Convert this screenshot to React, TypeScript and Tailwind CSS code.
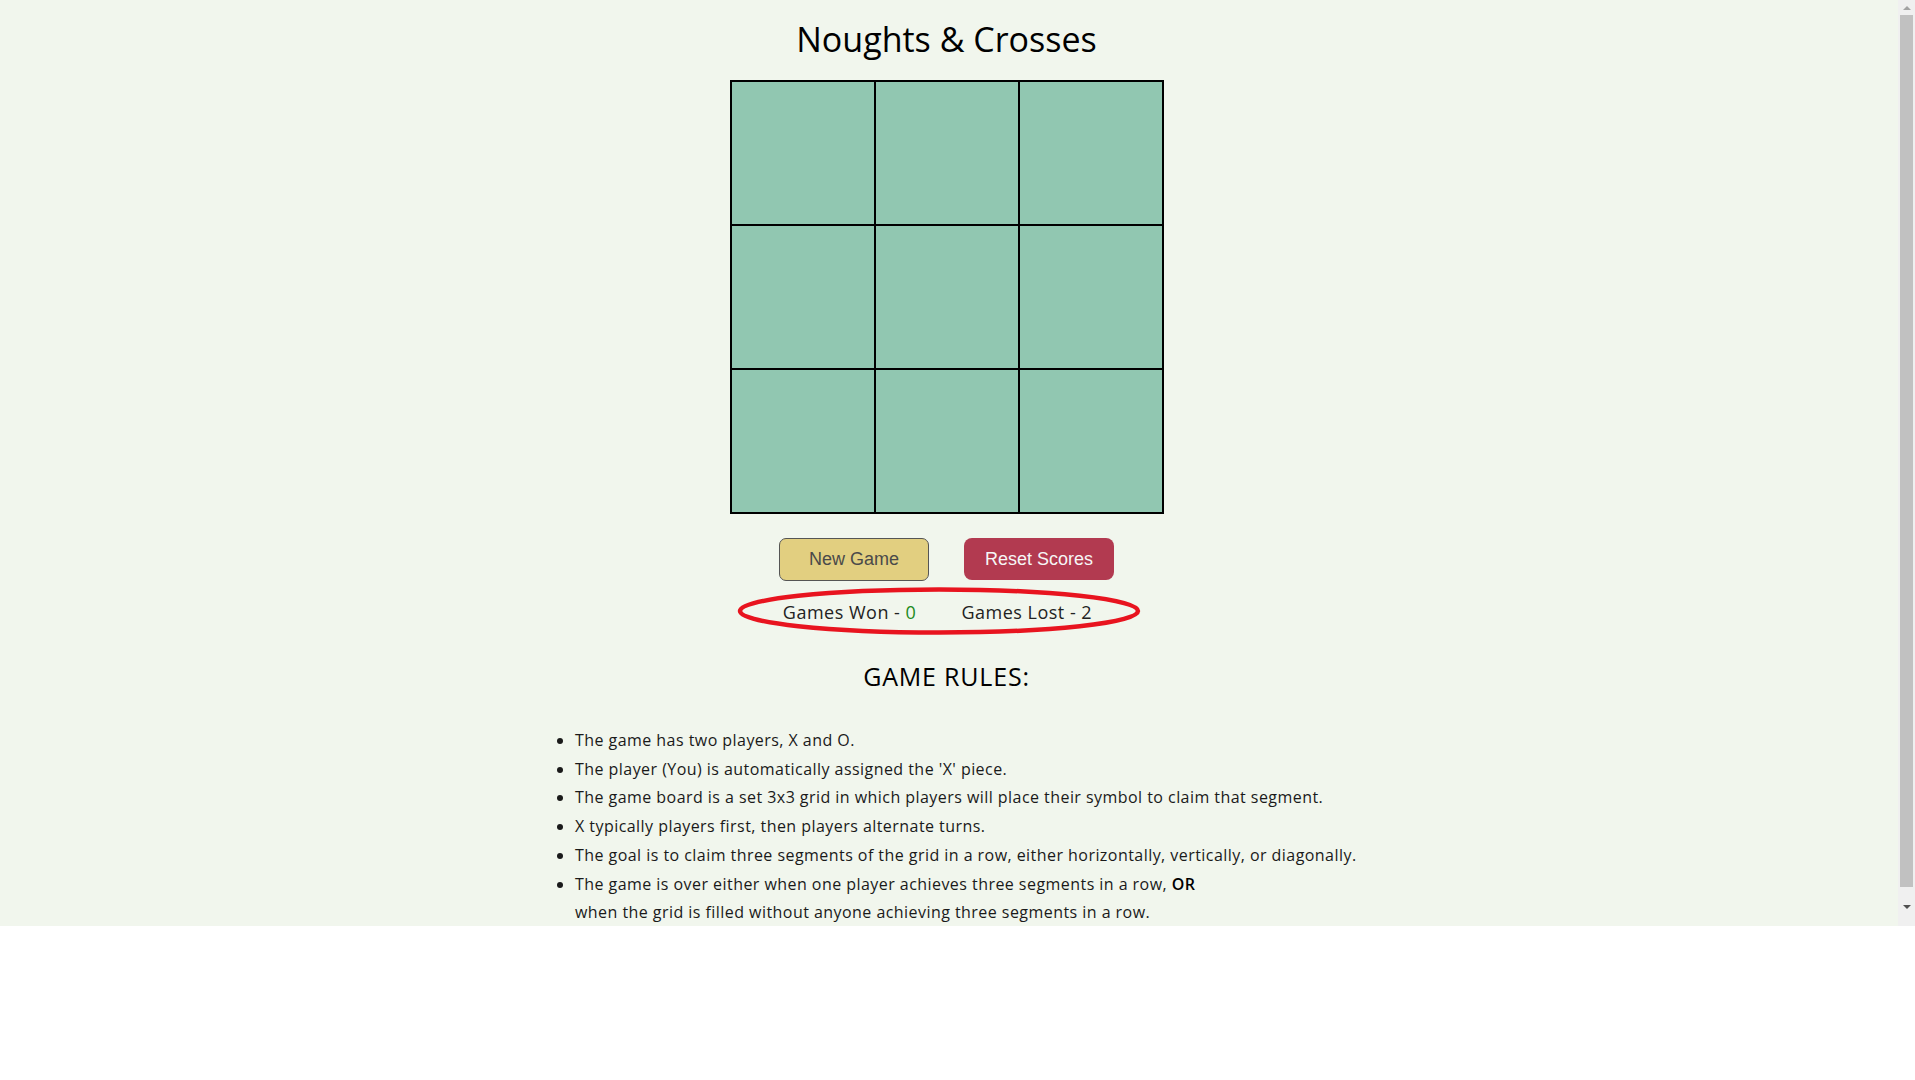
const rules = [
  "The game has two players, X and O.",
  "The player (You) is automatically assigned the 'X' piece.",
  "The game board is a set 3x3 grid in which players will place their symbol to claim that segment.",
  "X typically players first, then players alternate turns.",
  "The goal is to claim three segments of the grid in a row, either horizontally, vertically, or diagonally.",
];

function Scrollbar() {
  return (
    <div className="w-[17px] h-full bg-[#f0f0f0] flex flex-col items-center">
      <div className="h-[15px] flex items-center justify-center">
        <div className="w-0 h-0 border-l-[4px] border-r-[4px] border-b-[4px] border-l-transparent border-r-transparent border-b-[#a3a3a3]" />
      </div>
      <div className="w-[13px] h-[872px] bg-[#c1c1c1]" />
      <div className="flex-1 flex items-center justify-center">
        <div className="w-0 h-0 border-l-[4px] border-r-[4px] border-t-[4px] border-l-transparent border-r-transparent border-t-[#505050]" />
      </div>
    </div>
  );
}

export default function App() {
  return (
    <div className="w-full h-[1080px] bg-white" style={{ fontFamily: '"Open Sans", sans-serif' }}>
      <div className="flex h-[926px] bg-[#f1f6ed]">
        <div className="flex-1 overflow-hidden flex flex-col items-center pr-[5px] text-[#1a1a1a]">
          <h1 className="mt-[19px] text-[34px] leading-[40px] text-black">Noughts &amp; Crosses</h1>

          {/* board */}
          <div className="mt-[21px] grid grid-cols-3 gap-[2px] p-[2px] bg-black">
            {Array.from({ length: 9 }).map((_, i) => (
              <div key={i} className="w-[142px] h-[142px] bg-[#91c7b1]" />
            ))}
          </div>

          <div className="mt-[24px] flex gap-[35px]">
            <button
              className="w-[150px] h-[43px] rounded-[7px] border border-[#555] bg-[#e2cf80] text-[#4a4a4a] text-[18px]"
              style={{ fontFamily: '"Liberation Sans", Arial, sans-serif' }}
            >
              New Game
            </button>
            <button
              className="w-[150px] h-[42px] rounded-[8px] bg-[#b23a50] text-[#f6f6f6] text-[18px]"
              style={{ fontFamily: '"Liberation Sans", Arial, sans-serif' }}
            >
              Reset Scores
            </button>
          </div>

          {/* scores */}
          <div className="relative mt-[17px] w-[434px] h-[28px] flex justify-center gap-[45px] pr-[18px] text-[18px] leading-[28px] tracking-[0.5px] text-[#222]">
            <span>
              Games Won - <span className="text-[#218a21]">0</span>
            </span>
            <span>Games Lost - 2</span>
            <svg className="absolute left-[8.5px] top-[-11px] overflow-visible" width="403" height="48" viewBox="0 0 403 48">
              <ellipse cx="201" cy="24" rx="199" ry="21.5" fill="none" stroke="#e8141f" strokeWidth="4.5" />
            </svg>
          </div>

          <h2 className="mt-[35px] text-[25px] leading-[30px] tracking-[0.8px] text-black">GAME RULES:</h2>

          <ul className="mt-[35px] self-start ml-[538px] pl-[37px] list-disc text-[16px] leading-[28.7px] tracking-[0.45px] text-[#1a1a1a]">
            {rules.map((r) => (
              <li key={r}>{r}</li>
            ))}
            <li>
              The game is over either when one player achieves three segments in a row, <b className="font-semibold text-black">OR</b>
              <br />
              when the grid is filled without anyone achieving three segments in a row.
            </li>
          </ul>
        </div>
        <Scrollbar />
      </div>
    </div>
  );
}
